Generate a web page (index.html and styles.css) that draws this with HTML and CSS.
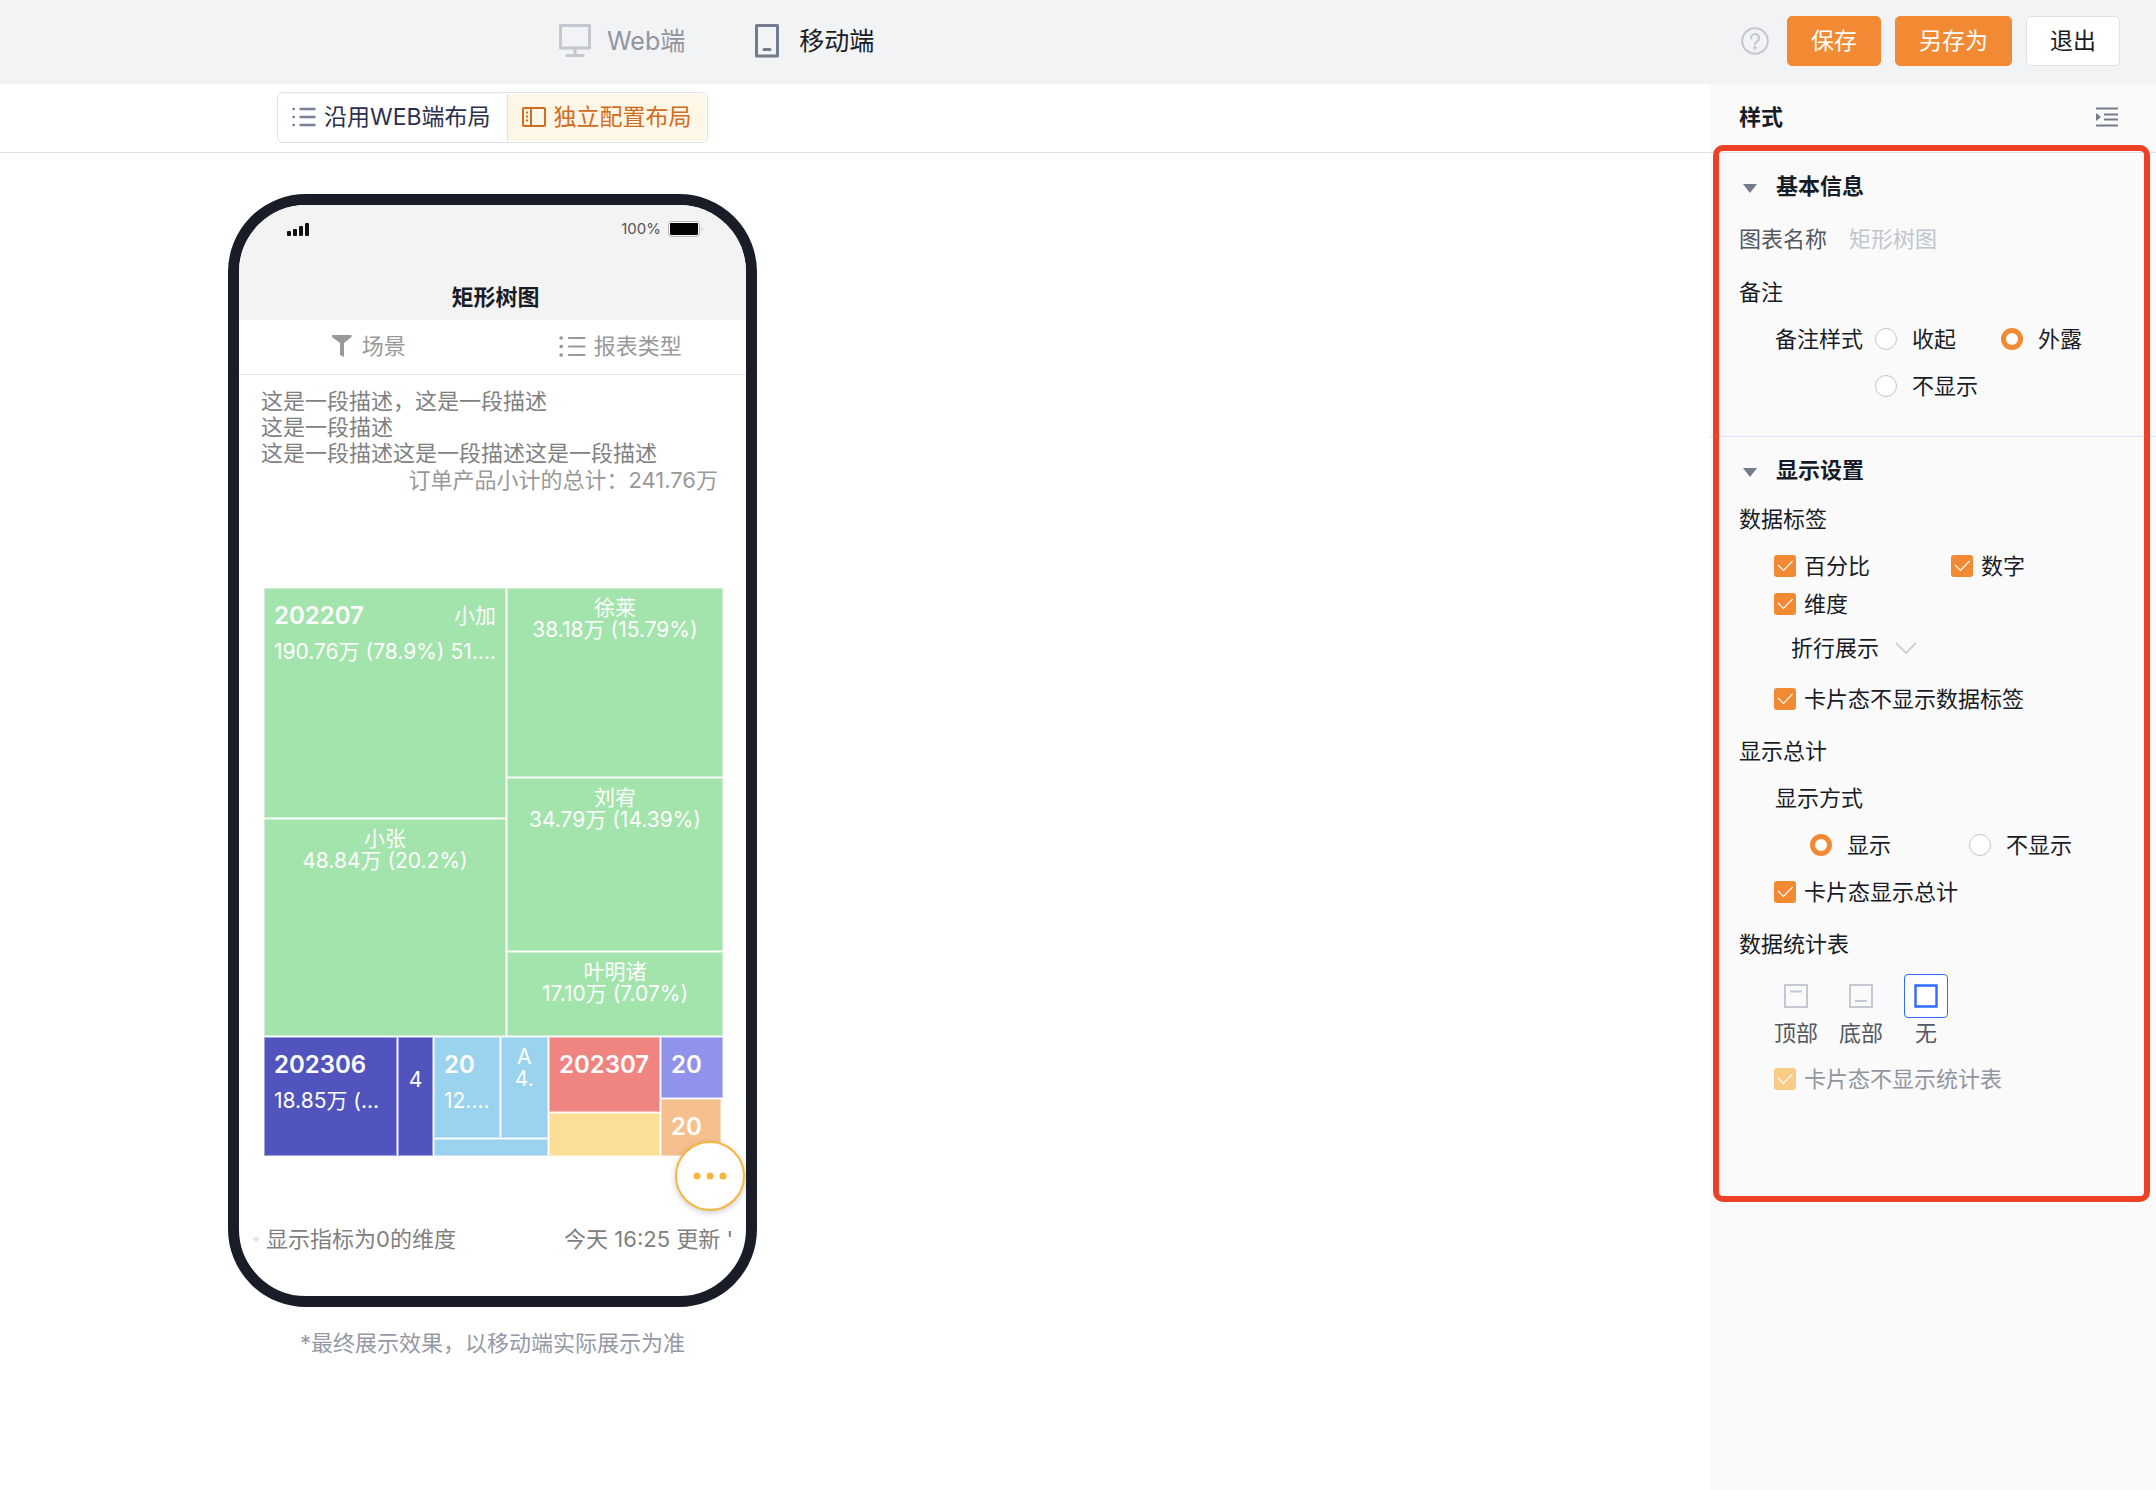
FILE: index.html
```html
<!DOCTYPE html>
<html lang="zh-CN">
<head>
<meta charset="utf-8">
<meta name="viewport" content="width=device-width, initial-scale=1">
<title>矩形树图</title>
<link rel="stylesheet" href="styles.css">
</head>
<body>
<div class="page">
  <header class="topbar">
    <nav class="devices">
      <button class="device" type="button">
        <svg width="32" height="34" viewBox="0 0 32 34" fill="none" stroke="#c4c6d0" stroke-width="3" stroke-linecap="round" stroke-linejoin="round"><path d="M1.5 1.5h29v22.500h-29zM16 24v7M8 31.500h16"/></svg>
        <span>Web端</span>
      </button>
      <button class="device device-active" type="button">
        <svg width="24" height="34" viewBox="0 0 24 34" fill="none" stroke="#737c8c" stroke-width="3" stroke-linecap="round" stroke-linejoin="round"><path d="M1.5 1.500h21v30.500h-21zM9 25.500h6"/></svg>
        <span>移动端</span>
      </button>
    </nav>
    <div class="actions">
      <svg class="help" width="28" height="28" viewBox="0 0 28 28" fill="none" stroke="#c4c6d0" stroke-width="2" stroke-linecap="round"><circle cx="14" cy="14" r="12.800"/><path d="M10 11.200a4 4 0 1 1 6 3.300c-1.400.8-2 1.400-2 2.700"/><circle cx="14" cy="20.800" r=".8" fill="#c4c6d0"/></svg>
      <button class="btn btn-primary" type="button">保存</button>
      <button class="btn btn-primary" type="button">另存为</button>
      <button class="btn" type="button">退出</button>
    </div>
  </header>

  <main class="workspace">
    <div class="toolbar">
      <div class="segment">
        <button class="seg" type="button">
          <svg width="24" height="20" viewBox="0 0 24 20" fill="none" stroke="#77809a" stroke-width="2.400" stroke-linecap="round"><path d="M8.500 2H22.500M8.500 10H22.500M8.500 18H22.500M1.500 2h.4M1.500 10h.4M1.500 18h.4"/></svg>
          <span>沿用WEB端布局</span>
        </button>
        <button class="seg seg-active" type="button">
          <svg width="24" height="20" viewBox="0 0 24 20" fill="none" stroke="#d06d21" stroke-width="2"><rect x="1" y="1" width="22" height="18" rx="1"/><path d="M9 1v18"/><path d="M5 4.500v12" stroke-dasharray="2 2"/></svg>
          <span>独立配置布局</span>
        </button>
      </div>
    </div>

    <div class="stage">
      <section class="phone">
        <div class="phone-head">
          <div class="status">
            <svg width="22" height="13" viewBox="0 0 22 13" fill="#111"><rect x="0" y="8" width="4" height="5" rx="1"/><rect x="6" y="6" width="4" height="7" rx="1"/><rect x="12" y="3" width="4" height="10" rx="1"/><rect x="18" y="0" width="4" height="13" rx="1"/></svg>
            <span class="status-right">100%
              <svg width="36" height="16" viewBox="0 0 36 16"><rect x=".5" y=".5" width="31" height="15" rx="3" fill="none" stroke="#b5b5b5"/><rect x="2" y="2" width="28" height="12" rx="1"/><path d="M33.500 6v4.500q2-2.200 0-4.500" fill="#b5b5b5"/></svg>
            </span>
          </div>
          <h1>矩形树图</h1>
        </div>
        <div class="filters">
          <button class="filter" type="button">
            <svg width="20" height="22" viewBox="0 0 20 22" fill="#999"><path d="M0 0h19.500v2L12 8v14l-4-2V8L0 2z"/></svg>
            <span>场景</span>
          </button>
          <button class="filter filter-type" type="button">
            <svg width="27" height="21" viewBox="0 0 27 21" fill="none" stroke="#999" stroke-width="2.200" stroke-linecap="round"><path d="M10 2h15.500M10 10.500h15.500M10 19h15.500"/><path stroke-width="3.400" d="M2 2h.4M2 10.500h.4M2 19h.4"/></svg>
            <span>报表类型</span>
          </button>
        </div>
        <div class="phone-body">
          <p class="desc">这是一段描述，这是一段描述<br>这是一段描述<br>这是一段描述这是一段描述这是一段描述</p>
          <p class="total">订单产品小计的总计：241.76万</p>
          <div class="treemap">
            <div class="tm-top">
              <div class="tm-col tm-a">
                <div class="cell green lead">
                  <div class="split"><strong>202207</strong><span>小加</span></div>
                  <div class="split"><span>190.76万 (78.9%)</span><span>51....</span></div>
                </div>
                <div class="cell green mid">小张<br>48.84万 (20.2%)</div>
              </div>
              <div class="tm-col tm-b">
                <div class="cell green mid">徐莱<br>38.18万 (15.79%)</div>
                <div class="cell green mid">刘宥<br>34.79万 (14.39%)</div>
                <div class="cell green mid">叶明诸<br>17.10万 (7.07%)</div>
              </div>
            </div>
            <div class="tm-bottom">
              <div class="cell indigo lead"><strong>202306</strong><span>18.85万 (...</span></div>
              <div class="cell indigo mid four">4</div>
              <div class="tm-col tm-c">
                <div class="tm-pair">
                  <div class="cell sky lead"><strong>20</strong><span>12....</span></div>
                  <div class="cell sky mid">A<br>4.</div>
                </div>
                <div class="cell sky"></div>
              </div>
              <div class="tm-col tm-d">
                <div class="cell coral lead"><strong>202307</strong></div>
                <div class="cell yellow"></div>
              </div>
              <div class="tm-col tm-e">
                <div class="cell violet lead"><strong>20</strong></div>
                <div class="cell peach lead"><strong>20</strong></div>
              </div>
            </div>
          </div>
          <div class="phone-foot">
            <span class="hint"><i class="ring"></i>显示指标为0的维度</span>
            <span>今天 16:25 更新 '</span>
          </div>
        </div>
        <button class="fab" type="button" aria-label="更多">
          <svg width="34" height="8" viewBox="0 0 34 8" fill="#f5b73e"><circle cx="4" cy="4" r="3.500"/><circle cx="17" cy="4" r="3.500"/><circle cx="30" cy="4" r="3.500"/></svg>
        </button>
      </section>
      <p class="caption">*最终展示效果，以移动端实际展示为准</p>
    </div>
  </main>

  <aside class="side">
    <div class="side-head">
      <h2>样式</h2>
      <svg width="22" height="20" viewBox="0 0 22 20" fill="none" stroke="#737c8c" stroke-width="2"><path d="M0 1.500h22M8 7.500h14M8 12.500h14M0 18.500h22"/><path d="M0 6l5 4-5 4z" fill="#737c8c" stroke="none"/></svg>
    </div>

    <section class="panel panel-basic">
      <h3 class="row title"><i class="caret"></i>基本信息</h3>
      <div class="row group name">
        <label for="chart-name">图表名称</label>
        <input id="chart-name" class="text" type="text" placeholder="矩形树图">
      </div>
      <div class="row group">备注</div>
      <div class="note">
        <span class="row">备注样式</span>
        <label class="row radio"><input type="radio" name="note">收起</label>
        <label class="row radio"><input type="radio" name="note" checked>外露</label>
        <label class="row radio second"><input type="radio" name="note">不显示</label>
      </div>
    </section>

    <section class="panel panel-display">
      <h3 class="row title"><i class="caret"></i>显示设置</h3>
      <div class="row first">数据标签</div>
      <div class="checks">
        <label class="row check"><input type="checkbox" checked>百分比</label>
        <label class="row check"><input type="checkbox" checked>数字</label>
      </div>
      <label class="row check short"><input type="checkbox" checked>维度</label>
      <div class="row group wrap">
        <select class="picker" aria-label="维度展示方式"><option>折行展示</option></select>
        <svg width="22" height="12" viewBox="0 0 22 12" fill="none" stroke="#c4c6d0" stroke-width="1.600"><path d="M1 1l10 10L21 1"/></svg>
      </div>
      <label class="row check"><input type="checkbox" checked>卡片态不显示数据标签</label>

      <div class="row group">显示总计</div>
      <div class="row indent">显示方式</div>
      <div class="modes">
        <label class="row radio"><input type="radio" name="mode" checked>显示</label>
        <label class="row radio"><input type="radio" name="mode">不显示</label>
      </div>
      <label class="row check"><input type="checkbox" checked>卡片态显示总计</label>

      <div class="row group">数据统计表</div>
      <div class="positions">
        <button class="pos" type="button">
          <span class="pos-icon"><svg width="24" height="24" viewBox="0 0 24 24" fill="none" stroke="#c4c8d2" stroke-width="2"><path d="M1 1h22v22H1zM6 7.500h12"/></svg></span>顶部
        </button>
        <button class="pos" type="button">
          <span class="pos-icon"><svg width="24" height="24" viewBox="0 0 24 24" fill="none" stroke="#c4c8d2" stroke-width="2"><path d="M1 1h22v22H1zM6 17h12"/></svg></span>底部
        </button>
        <button class="pos pos-active" type="button">
          <span class="pos-icon"><svg width="24" height="24" viewBox="0 0 24 24" fill="none" stroke="#2f6bff" stroke-width="2.400"><path d="M1.500 1.500h21v21h-21z"/></svg></span>无
        </button>
      </div>
      <label class="row check disabled"><input type="checkbox" checked disabled>卡片态不显示统计表</label>
    </section>
    <div class="marker"></div>
  </aside>
</div>
</body>
</html>
```

FILE: styles.css
```css
* { box-sizing: border-box; }

body {
  margin: 0;
  background: #fff;
  color: #181c25;
  font: 400 22px/32px Inter, "Noto Sans CJK SC", sans-serif;
}

h1, h2, h3, p { margin: 0; font-size: 22px; }
svg { display: block; flex: none; }
button, input, select { font: inherit; color: inherit; margin: 0; }
button { padding: 0; border: 0; background: none; }

.page {
  display: grid;
  grid-template: 84px auto / minmax(0, 1fr) 446px;
  min-height: 100vh;
}

/* top bar */
.topbar {
  grid-column: 1 / -1;
  display: flex;
  justify-content: space-between;
  align-items: center;
  padding: 0 36px 2px 559px;
  background: #f1f3f5;
}
.devices { display: flex; gap: 70px; font-size: 25px; }
.device { display: flex; align-items: center; gap: 16px; color: #91959e; }
.device-active { gap: 20px; color: #181c25; }
.actions { display: flex; align-items: center; gap: 14px; font-size: 23px; }
.help { margin-right: 4px; }
.btn {
  height: 50px;
  padding: 0 23px;
  border: 1px solid #dee1e8;
  border-radius: 5px;
  background: #fff;
}
.btn-primary { background: #f18a33; border-color: #f18a33; color: #fff; }

/* layout switch */
.toolbar {
  display: flex;
  align-items: center;
  height: 69px;
  padding: 0 0 2px 277px;
  border-bottom: 1px solid #dee1e8;
}
.segment {
  display: flex;
  height: 51px;
  padding: 1px;
  border: 1px solid #dee1e8;
  border-radius: 6px;
  font-size: 23px;
  color: #2a304d;
}
.seg { display: flex; align-items: center; gap: 8px; padding: 0 16px 0 13px; }
.seg-active {
  padding: 0 14px;
  border-left: 1px solid #dee1e8;
  border-radius: 0 4px 4px 0;
  background: #fef6e6;
  color: #d06d21;
}

/* phone preview */
.stage { width: 529px; margin: 41px 0 0 228px; }
.phone {
  position: relative;
  border: 11px solid #191d27;
  border-radius: 78px;
  background: #fff;
}
.phone-head {
  height: 115px;
  padding: 12px 42px 0 48px;
  border-radius: 67px 67px 0 0;
  background: #f3f3f3;
  text-align: center;
}
.status { display: flex; justify-content: space-between; align-items: center; height: 24px; margin-bottom: 40px; }
.status-right { display: flex; align-items: center; gap: 7px; font-size: 15px; color: #555; }
.filters {
  display: grid;
  grid-template-columns: 1fr 1fr;
  height: 55px;
  padding: 0 0 2px 4px;
  border-bottom: 1px solid #e6e6e6;
  color: #999;
}
.filter { display: flex; justify-content: center; align-items: center; gap: 10px; }
.filter-type { gap: 8px; }
.phone-body { padding: 13px 23px 0 25px; color: #808080; }
.desc { line-height: 26px; margin-left: -3px; }
.total { margin-right: 5px; line-height: 28px; text-align: right; color: #999; }
.phone-foot {
  display: flex;
  justify-content: space-between;
  margin: 67px -10px 0;
  padding-bottom: 41px;
}
.hint { display: flex; align-items: center; gap: 8px; }
.ring { width: 4px; height: 4px; border: 1px solid #ccc; border-radius: 50%; }
.fab {
  position: absolute;
  right: 1px;
  bottom: 85px;
  display: grid;
  place-items: center;
  width: 70px;
  height: 70px;
  border: 2px solid #f5b73e;
  border-radius: 50%;
  background: #fff;
  box-shadow: 0 2px 6px rgb(0 0 0 / 20%);
}
.caption { margin-top: 20px; text-align: center; color: #9599a5; }

/* treemap */
.treemap { display: grid; grid-template-rows: 448px 119px; gap: 1px; margin-top: 94px; color: #fff; }
.tm-top { display: grid; grid-template-columns: 242fr 216fr; gap: 1px; }
.tm-bottom { display: grid; grid-template-columns: 133fr 35fr 114fr 111fr 62fr; gap: 1px; }
.tm-col { display: grid; gap: 1px; }
.tm-a { grid-template-rows: 230fr 217fr; }
.tm-b { grid-template-rows: 189fr 173fr 84fr; }
.tm-c { grid-template-rows: 101fr 17fr; }
.tm-d { grid-template-rows: 75fr 43fr; }
.tm-e { grid-template-rows: 61fr 57fr; }
.tm-pair { display: grid; grid-template-columns: 65fr 47fr; gap: 1px; }
.cell {
  min-width: 0;
  overflow: hidden;
  border: 1px solid rgb(255 255 255 / 45%);
  white-space: nowrap;
}
.lead { padding: 11px 9px 0; }
.lead strong, .lead > span { display: block; }
.lead strong { font-size: 24px; font-weight: 600; }
.lead > span { margin-top: 4px; }
.split { display: flex; justify-content: space-between; margin-bottom: 4px; }
.split span, .lead > span, .mid { font-size: 21px; }
.mid { padding-top: 8px; line-height: 22px; text-align: center; }
.four { padding-top: 31px; }
.green { background: #a2e4ac; }
.indigo { background: #5254be; }
.sky { background: #9bd2ee; }
.coral { background: #f08481; }
.yellow { background: #fbdf97; }
.violet { background: #9192ea; }
.peach { background: #f5c08d; margin-right: 2px; }

/* style panel */
.side { position: relative; background: #fafafa; }
.side-head {
  display: flex;
  justify-content: space-between;
  align-items: center;
  height: 69px;
  padding: 0 38px 2px 29px;
  border-bottom: 1px solid #dee1e8;
}
.panel { padding: 9px 29px 0; }
.panel-basic { padding-bottom: 27px; border-bottom: 1px solid #dee1e8; }
.row { display: flex; align-items: center; height: 47px; }
.group { margin-top: 5px; }
.panel-basic .group { margin-top: 6px; }
.first { margin-top: 2px; }
.indent { padding-left: 36px; }
.title { gap: 19px; padding-left: 4px; }
.caret { margin-top: 5px; border: solid transparent; border-width: 9px 7px 0; border-top-color: #737c8c; }
.name { gap: 22px; color: #545861; }
.text { width: 240px; padding: 0; border: 0; outline: 0; background: none; }
.text::placeholder { color: #c1c5ce; opacity: 1; }
.note { display: grid; grid-template-columns: 100px 126px 1fr; padding-left: 36px; }
.second { grid-column: 2 / -1; }
.radio { gap: 15px; }
.radio input {
  appearance: none;
  width: 22px;
  height: 22px;
  border: 1px solid #c4c6d0;
  border-radius: 50%;
  background: #fff;
}
.radio input:checked { border: 5px solid #f18a33; }
.check { gap: 8px; padding-left: 35px; }
.check input {
  appearance: none;
  width: 22px;
  height: 22px;
  border-radius: 3px;
  background: #f18a33 url("data:image/svg+xml,%3Csvg xmlns='http://www.w3.org/2000/svg' viewBox='0 0 22 22'%3E%3Cpath d='M4 10l5.500 5.500L18.500 6' fill='none' stroke='%23fff' stroke-width='1.100'/%3E%3C/svg%3E");
}
.checks { display: grid; grid-template-columns: 177px 1fr; }
.short { height: 30px; }
.wrap { gap: 15px; margin-bottom: 4px; padding-left: 52px; }
.picker { appearance: none; padding: 0; border: 0; background: none; }
.modes { display: grid; grid-template-columns: 159px 1fr; padding-left: 71px; }
.positions { display: flex; gap: 21px; padding-left: 35px; margin: 7px 0; color: #545861; }
.pos { width: 44px; line-height: 30px; }
.pos-icon { display: grid; place-items: center; height: 44px; border: 1px solid transparent; border-radius: 4px; }
.pos-active .pos-icon { border-color: #2f6bff; background: #fff; }
.disabled { color: #91959e; }
.disabled input { background-color: #f8cc86; }

/* highlight frame around the settings */
.marker {
  position: absolute;
  inset: 61px 6px auto 3px;
  height: 1057px;
  border: 6px solid #ec4126;
  border-radius: 10px;
  pointer-events: none;
}
```
